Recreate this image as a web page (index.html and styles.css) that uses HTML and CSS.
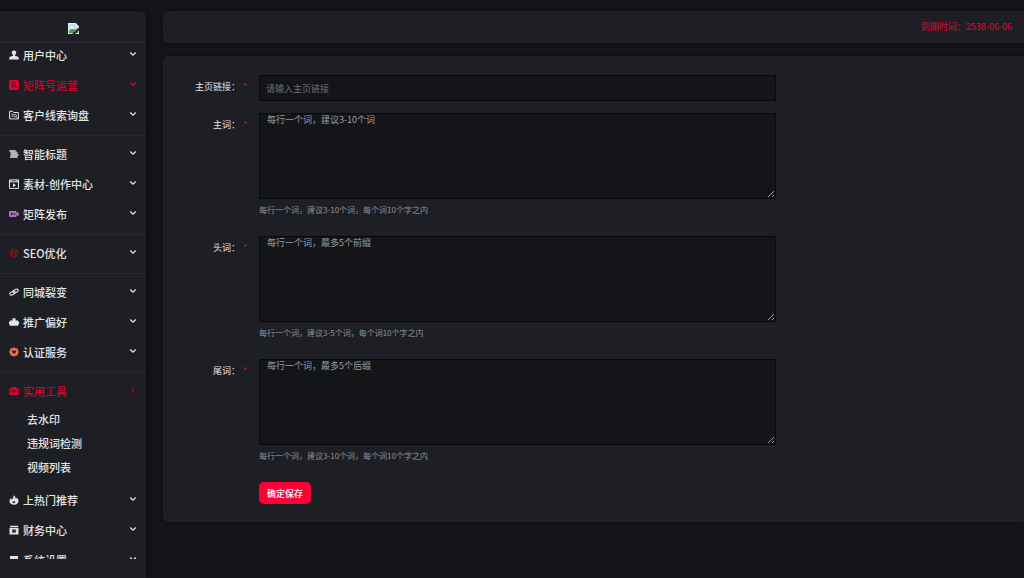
FILE: index.html
```html
<!DOCTYPE html>
<html lang="zh-CN">
<head>
<meta charset="utf-8">
<meta name="viewport" content="width=device-width, initial-scale=1">
<title>矩阵号运营</title>
<link rel="stylesheet" href="styles.css">
</head>
<body>
<svg class="defs" aria-hidden="true">
  <symbol id="down" viewBox="0 0 8 8"><path d="M1.2 2.6 4 5.2 6.8 2.6" fill="none" stroke="currentColor" stroke-width="1.3"/></symbol>
  <symbol id="left" viewBox="0 0 8 8"><path d="M5.4 1.2 2.8 4 5.4 6.8" fill="none" stroke="currentColor" stroke-width="1"/></symbol>
</svg>
<div class="layout">
  <aside class="sidebar">
    <div class="brand">
      <svg class="brand-icon" viewBox="0 0 16 16" role="img" aria-label="logo"><path d="M0 0h11l5 5v11H0z" fill="#f4f6f5"/><path d="M1 1h9.500v4.500H15V15H1z" fill="#c3d9f4"/><path d="M1 15v-3c3-4 6-4 9-2l5-3v8z" fill="#4fa045"/><path d="M3 7c0-3 4-3 4-1 2 0 2 2 0 2H4z" fill="#fff"/><path d="M6 16 16 7v3l-6 6z" fill="#1e1f24"/><path d="M11 0v5h5z" fill="#dfe5e2"/></svg>
    </div>
    <nav class="menu">
      <ul class="list">
        <li><a class="item" href="#"><svg class="icon" viewBox="0 0 10 10"><circle cx="5" cy="2.700" r="2.300" fill="currentColor"/><path d="M4 4.500h2v1.300l3 .9q.7.3.7 1.100v1.700H.3V7.800q0-.8.7-1.100l3-.9z" fill="currentColor"/></svg>用户中心<svg class="chevron"><use href="#down"/></svg></a></li>
        <li><a class="item active" href="#"><svg class="icon" viewBox="0 0 10 10"><rect width="10" height="10" rx="1.500" fill="currentColor"/><circle cx="5" cy="3.800" r="1.700" fill="none" stroke="#1e1f24" stroke-width=".8"/><path d="M2.300 8.300q.3-2.300 2.700-2.300t2.700 2.300M5.500 5.500 7 8" fill="none" stroke="#1e1f24" stroke-width=".8"/></svg>矩阵号运营<svg class="chevron"><use href="#down"/></svg></a></li>
        <li><a class="item" href="#"><svg class="icon" viewBox="0 0 10 10"><path d="M.6 8.900V1.300h3l1 1.200h4.800v6.400zM2.500 4.300h2M2.500 6.300h1.500" fill="none" stroke="currentColor"/><circle cx="6.200" cy="5.600" r="1.300" fill="none" stroke="currentColor" stroke-width=".8"/><path d="m7.200 6.600 1.500 1.500" stroke="currentColor"/></svg>客户线索询盘<svg class="chevron"><use href="#down"/></svg></a></li>
        <li class="divided"><a class="item" href="#"><svg class="icon" viewBox="0 0 10 10"><path d="M.5 2h6M1.500 4h7M1.500 6h8M1 8h7.500" stroke="currentColor" stroke-width="1.300"/><path d="m6 1 3 2.500H6z" fill="#9a9ba0"/></svg>智能标题<svg class="chevron"><use href="#down"/></svg></a></li>
        <li><a class="item" href="#"><svg class="icon" viewBox="0 0 10 10"><path d="M.5.900h9v8.500h-9zM.5 2.800h9" fill="none" stroke="currentColor"/><path d="M2 1v1.800M8 1v1.800" stroke="currentColor"/><path d="m4 4.200 3 2-3 2z" fill="currentColor"/></svg>素材-创作中心<svg class="chevron"><use href="#down"/></svg></a></li>
        <li><a class="item" href="#"><svg class="icon purple" viewBox="0 0 10 10"><path d="M1 2h5.500q1 0 1 1v.8L9.700 3v4L7.500 6.200V7q0 1-1 1H1Q0 8 0 7V3q0-1 1-1z" fill="currentColor"/><path d="M2 4h2v2H2zM5 3.600 6.500 5 5 6.400z" fill="#3a2144"/></svg>矩阵发布<svg class="chevron"><use href="#down"/></svg></a></li>
        <li class="divided"><a class="item" href="#"><svg class="icon maroon" viewBox="0 0 10 10"><circle cx="5" cy="5" r="4" fill="none" stroke="currentColor" stroke-width=".9"/><path d="M.8 4h8.400M.8 6h8.400M3.500 1.500v7M6.500 1.500v7" stroke="currentColor" stroke-width=".8"/></svg>SEO优化<svg class="chevron"><use href="#down"/></svg></a></li>
        <li class="divided"><a class="item" href="#"><svg class="icon" viewBox="0 0 10 10"><g fill="none" stroke="currentColor" stroke-width="1.100"><rect x="3.800" y="2.700" width="5.500" height="2.800" rx="1.400" transform="rotate(-28 6.500 4.100)"/><rect x=".7" y="4.700" width="5.500" height="2.800" rx="1.400" transform="rotate(-28 3.500 6.100)"/></g></svg>同城裂变<svg class="chevron"><use href="#down"/></svg></a></li>
        <li><a class="item" href="#"><svg class="icon" viewBox="0 0 10 10"><path d="M3.500 3.500V1.200h3v2.300h2q1 0 1 1v3.300q0 1-1 1h-7q-1 0-1-1V4.500q0-1 1-1zM0 5h10v2H0z" fill="currentColor"/></svg>推广偏好<svg class="chevron"><use href="#down"/></svg></a></li>
        <li><a class="item" href="#"><svg class="icon orange" viewBox="0 0 10 10"><path d="m5 .3 1.500.9 1.800.1.500 1.800L9.900 5l-1.100 1.800-.5 1.800-1.800.2L5 9.700l-1.500-.9-1.800-.2-.5-1.800L.1 5l1.100-1.900.5-1.800 1.800-.1z" fill="currentColor"/><path d="M5 7.200 2.700 4.800q0-1.700 1.300-1.500L5 4l1-.7q1.300-.2 1.300 1.500z" fill="#4a241c"/></svg>认证服务<svg class="chevron"><use href="#down"/></svg></a></li>
        <li class="divided"><a class="item active" href="#"><svg class="icon" viewBox="0 0 10 10"><path d="M2.800 2.300V1h4.400v1.300h1.600q1 0 1 1V8q0 1-1 1H1.200q-1 0-1-1V3.300q0-1 1-1zM3.800 2v.3h2.400V2z" fill="currentColor"/><path d="M.5 5h3.200M6.300 5h3.200M3.800 4.500h2.400v1.300H3.800z" stroke="#1e1f24" stroke-width=".7" fill="none"/></svg>实用工具<svg class="chevron"><use href="#left"/></svg></a>
          <ul class="sublist">
            <li><a class="subitem" href="#">去水印</a></li>
            <li><a class="subitem" href="#">违规词检测</a></li>
            <li><a class="subitem" href="#">视频列表</a></li>
          </ul>
        </li>
        <li><a class="item" href="#"><svg class="icon" viewBox="0 0 10 10"><path d="M4.600.2Q7 1.500 6.700 4q.8-.4.900-1.500Q9.600 4 9.500 6.100 9.200 9.800 5 9.800T.5 6Q.6 4 2 3q0 1.200.8 1.500Q4.700 3 4.600.2z" fill="currentColor"/><path d="M3.300 6q1.500 1.200 3 0 .3 2.200-1.400 2.200T3.300 6z" fill="#1e1f24"/></svg>上热门推荐<svg class="chevron"><use href="#down"/></svg></a></li>
        <li><a class="item" href="#"><svg class="icon" viewBox="0 0 10 10"><path d="M1 .8h8v1.300H1zM.5 2.700h9v6.800h-9z" fill="currentColor"/><path d="M3 4.300h4v3.500H3z" fill="#55565c"/><path d="M4.300 5.200h1.500v1.600H4.300z" fill="#1e1f24"/></svg>财务中心<svg class="chevron"><use href="#down"/></svg></a></li>
        <li><a class="item" href="#"><svg class="icon" viewBox="0 0 10 10"><path d="M1 1h8v8H1z" fill="currentColor"/></svg>系统设置<svg class="chevron"><use href="#down"/></svg></a></li>
      </ul>
    </nav>
  </aside>
  <main class="main">
    <header class="topbar">到期时间：2538-06-06</header>
    <form class="card">
      <div class="row single">
        <label class="label" for="home">主页链接：</label><span class="required">*</span>
        <div class="field"><input class="control" id="home" type="text" placeholder="请输入主页链接"></div>
      </div>
      <div class="row">
        <label class="label" for="main-words">主词：</label><span class="required">*</span>
        <div class="field"><textarea class="control area" id="main-words" placeholder="每行一个词，建议3-10个词"></textarea><p class="help">每行一个词，建议3-10个词，每个词10个字之内</p></div>
      </div>
      <div class="row">
        <label class="label" for="head-words">头词：</label><span class="required">*</span>
        <div class="field"><textarea class="control area" id="head-words" placeholder="每行一个词，最多5个前缀"></textarea><p class="help">每行一个词，建议3-5个词，每个词10个字之内</p></div>
      </div>
      <div class="row">
        <label class="label" for="tail-words">尾词：</label><span class="required">*</span>
        <div class="field"><textarea class="control area" id="tail-words" placeholder="每行一个词，最多5个后缀"></textarea><p class="help">每行一个词，建议3-10个词，每个词10个字之内</p></div>
      </div>
      <div class="actions"><button class="submit" type="submit">确定保存</button></div>
    </form>
  </main>
</div>
</body>
</html>
```
FILE: styles.css
```css
* {
  box-sizing: border-box;
}

body {
  margin: 0;
  background: #141518;
  color: #e4e4e6;
  font-family: "Noto Sans CJK SC", sans-serif;
  font-size: 9px;
}

ul {
  margin: 0;
  padding: 0;
  list-style: none;
}

a {
  color: inherit;
  text-decoration: none;
}

.defs {
  display: none;
}

.layout {
  display: flex;
  height: 100vh;
  padding-top: 11px;
  overflow: hidden;
}

.sidebar {
  display: flex;
  flex: none;
  flex-direction: column;
  width: 146px;
  padding-bottom: 19px;
  background: #1e1f24;
  border-top-right-radius: 6px;
  box-shadow: 0 0 5px #08090b;
}

.brand {
  display: flex;
  flex: none;
  align-items: center;
  justify-content: center;
  height: 32px;
  padding-top: 4px;
  border-bottom: 1px solid #2b2d38;
}

.brand-icon {
  width: 11px;
  height: 11px;
}

.menu {
  flex: 1;
  min-height: 0;
  overflow: hidden;
}

.list {
  margin-top: -3px;
}

.item {
  display: flex;
  align-items: center;
  gap: 4px;
  height: 30px;
  padding: 0 9px;
  font-size: 11px;
  font-weight: 500;
}

.icon {
  flex: none;
  width: 10px;
  height: 10px;
}

.chevron {
  width: 8px;
  height: 8px;
  margin-bottom: 3px;
  margin-left: auto;
}

.active {
  color: #e5002f;
  font-weight: 400;
}

.purple {
  color: #b469c6;
}

.maroon {
  color: #8c1420;
}

.orange {
  color: #ed7350;
}

.divided {
  margin-top: 5px;
  padding-top: 3px;
  border-top: 1px solid #292a30;
}

.sublist {
  padding: 1px 0 6px;
}

.subitem {
  display: block;
  padding-left: 27px;
  font-size: 11px;
  font-weight: 500;
  line-height: 24px;
}

.main {
  display: flex;
  flex: 1;
  flex-direction: column;
  gap: 13px;
  min-width: 0;
  padding-left: 17px;
}

.topbar {
  padding: 0 12px;
  background: #1e1f24;
  border-radius: 6px 0 0 6px;
  box-shadow: 0 0 4px #0c0d0f;
  color: #e5002f;
  line-height: 32px;
  text-align: right;
}

.card {
  padding: 19px 0 18px;
  background: #1e1f24;
  border-radius: 6px 0 0 6px;
  box-shadow: 0 0 4px #0c0d0f;
}

.row {
  display: flex;
  align-items: flex-start;
  margin-bottom: 18px;
}

.single {
  margin-bottom: 12px;
}

.label {
  width: 77px;
  line-height: 24px;
  text-align: right;
}

.required {
  width: 19px;
  padding-left: 3px;
  color: #d80d2c;
  line-height: 24px;
}

.field {
  width: 60%;
}

.control {
  display: block;
  width: 100%;
  height: 26px;
  padding: 0 6px;
  background: #141518;
  border: 1px solid #08090b;
  border-radius: 1px;
  outline: 0;
  color: #e4e4e6;
  font-family: inherit;
  font-size: 9px;
}

.control::placeholder {
  color: #707175;
}

.area {
  height: 86px;
  padding: 0 7px;
  font-size: 9px;
  line-height: 11px;
  resize: vertical;
}

.area::placeholder {
  color: #9b9ca0;
}

.help {
  margin: 0;
  padding-top: 3px;
  color: #919296;
  font-size: 8px;
  line-height: 16px;
}

.actions {
  padding-left: 96px;
}

.submit {
  display: block;
  height: 22px;
  padding: 0 8px;
  background: #ff0036;
  border: 0;
  border-radius: 5px;
  color: #fff;
  font-family: inherit;
  font-size: 9px;
  font-weight: 500;
}
```
